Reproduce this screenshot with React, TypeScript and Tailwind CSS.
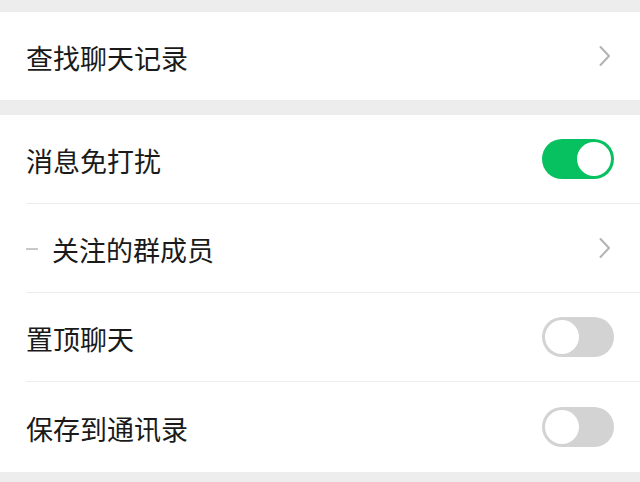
import React from "react";

const font = { fontFamily: '"Noto Sans CJK SC", "Noto Sans", sans-serif' };

function Chevron() {
  return (
    <svg width="14" height="22" viewBox="0 0 14 22" className="mr-[28px]">
      <path d="M2.5 2 L11 11 L2.5 20" fill="none" stroke="#b3b3b3" strokeWidth="2" strokeLinecap="round" strokeLinejoin="round" />
    </svg>
  );
}

function Toggle({ on }: { on: boolean }) {
  return on ? (
    <div className="mr-[26px] flex h-[40px] w-[72px] items-center justify-end rounded-full bg-[#07c160] p-[3px]">
      <div className="h-[34px] w-[34px] rounded-full bg-white" />
    </div>
  ) : (
    <div className="mr-[26px] flex h-[40px] w-[72px] items-center rounded-full bg-[#d3d3d3] p-[3px]">
      <div className="h-[34px] w-[34px] rounded-full bg-white" />
    </div>
  );
}

function Row({ label, right, border = true, dash = false, h = "h-[89px]" }: { label: string; right: React.ReactNode; border?: boolean; dash?: boolean; h?: string }) {
  return (
    <div className={`flex ${h} items-center justify-between pl-[26px]`}>
      <div className={`flex h-full flex-1 items-center justify-between ${border ? "border-b border-[#ececec]" : ""}`}>
        <div className="flex items-center pt-[2px]">
          {dash && <div className="mr-[14px] h-[2px] w-[12px] bg-[#c8c8c8]" />}
          <span className="text-[27px] leading-none text-[#1a1a1a]">{label}</span>
        </div>
        {right}
      </div>
    </div>
  );
}

export default function App() {
  return (
    <div className="h-[482px] w-[640px] overflow-hidden bg-[#ededed]" style={font}>
      <div className="h-[12px]" />
      <div className="bg-white">
        <Row label="查找聊天记录" right={<Chevron />} border={false} h="h-[88px]" />
      </div>
      <div className="h-[15px]" />
      <div className="bg-white">
        <Row label="消息免打扰" right={<Toggle on />} />
        <Row label="关注的群成员" right={<Chevron />} dash />
        <Row label="置顶聊天" right={<Toggle on={false} />} />
        <Row label="保存到通讯录" right={<Toggle on={false} />} border={false} h="h-[90px]" />
      </div>
    </div>
  );
}
